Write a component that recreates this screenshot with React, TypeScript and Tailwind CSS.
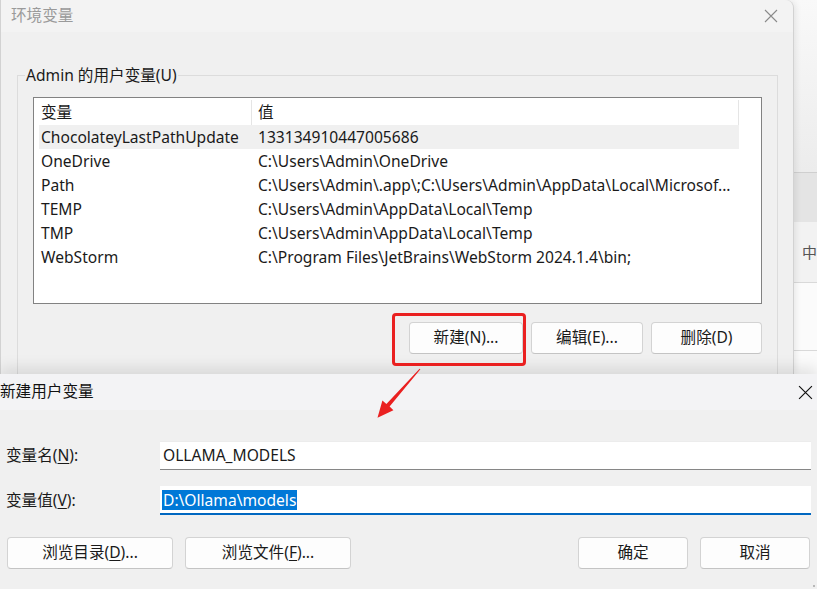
import React from "react";

const FONT = { fontFamily: '"Noto Sans", "Noto Sans CJK SC", sans-serif' };

function WinButton({ children, className = "" }: { children: React.ReactNode; className?: string }) {
  return (
    <div
      className={
        "flex items-center justify-center h-[32px] rounded-[4px] border border-[#d3d3d3] border-b-[#c4c4c4] bg-[#fdfdfd] text-[15.6px] text-[#1a1a1a] shrink-0 " +
        className
      }
    >
      {children}
    </div>
  );
}

function CloseX({ color, size = 14 }: { color: string; size?: number }) {
  return (
    <svg width={size} height={size} viewBox="0 0 14 14" fill="none">
      <path d="M1 1L13 13M13 1L1 13" stroke={color} strokeWidth="1.1" />
    </svg>
  );
}

export default function App() {
  const rows: [string, string][] = [
    ["ChocolateyLastPathUpdate", "133134910447005686"],
    ["OneDrive", "C:\\Users\\Admin\\OneDrive"],
    ["Path", "C:\\Users\\Admin\\.app\\;C:\\Users\\Admin\\AppData\\Local\\Microsof..."],
    ["TEMP", "C:\\Users\\Admin\\AppData\\Local\\Temp"],
    ["TMP", "C:\\Users\\Admin\\AppData\\Local\\Temp"],
    ["WebStorm", "C:\\Program Files\\JetBrains\\WebStorm 2024.1.4\\bin;"],
  ];

  return (
    <div className="relative w-[817px] h-[589px] overflow-hidden bg-[#f3f3f3] text-[#1a1a1a]" style={FONT}>
      {/* window in the far background (right edge) */}
      <div className="absolute left-[780px] top-0 w-[37px] h-[374px] flex flex-col bg-[#f7f7f7]">
        <div className="h-[172px] shrink-0 bg-gradient-to-b from-[#f9f9f9] to-[#ececec]" />
        <div className="h-[50px] shrink-0 border-t border-[#cfcfcf] bg-[#e4e4e4]" />
        <div className="h-[60px] shrink-0 bg-[#f2f2f2] flex items-center pl-[22px] text-[15px] text-[#555]">中</div>
        <div className="h-[68px] shrink-0 border-t border-[#d9d9d9] bg-[#fbfbfb]" />
        <div className="flex-1 border-t border-[#d9d9d9] bg-[#fbfbfb]" />
      </div>

      {/* back window: 环境变量 */}
      <div className="absolute left-0 top-0 w-[794px] h-[374px] overflow-hidden flex flex-col bg-[#f0f0f0] rounded-tr-[8px] border-l border-r border-[#d2d2d2] shadow-[2px_0_6px_rgba(0,0,0,0.08)]">
        <div className="h-[32px] shrink-0 flex items-center justify-between pl-[10px] pr-[15px] bg-[#f3f3f3] rounded-tr-[8px]">
          <span className="text-[15.6px] text-[#9a9a9a]">环境变量</span>
          <CloseX color="#8a8a8a" size={14} />
        </div>
        <fieldset className="shrink-0 mt-[32px] ml-[16px] mr-[15px] border border-[#dcdcdc] p-0 h-[330px] min-w-0">
          <legend className="ml-[7px] px-[1px] text-[15.6px] leading-[22px]">Admin 的用户变量(U)</legend>
          <div className="pl-[15px] pr-[15px]">
            <div className="mt-[11px] h-[207px] border border-[#828282] bg-white pl-[5px] pr-[22px] text-[15.6px]">
              <div className="flex h-[27px] items-center pt-[2px]">
                <div className="w-[213px] h-full flex items-center pl-[2px] border-r border-[#e5e5e5]">变量</div>
                <div className="flex-1 h-full flex items-center pl-[6px] border-r border-[#e5e5e5]">值</div>
              </div>
              {rows.map(([k, v], i) => (
                <div key={k} className={"flex h-[24px] items-center pt-[1px] " + (i === 0 ? "bg-[#f0f0f0]" : "")}>
                  <div className="w-[213px] pl-[2px] whitespace-nowrap">{k}</div>
                  <div className="flex-1 pl-[6px] whitespace-nowrap overflow-hidden">{v}</div>
                </div>
              ))}
            </div>
            <div className="mt-[18px] flex justify-end gap-[8px]">
              <WinButton className="w-[114px]">新建(N)...</WinButton>
              <WinButton className="w-[112px]">编辑(E)...</WinButton>
              <WinButton className="w-[111px]">删除(D)</WinButton>
            </div>
          </div>
        </fieldset>
      </div>

      {/* front dialog: 新建用户变量 */}
      <div className="absolute left-0 top-[374px] w-[817px] h-[215px] flex flex-col bg-[#f0f0f0] shadow-[0_-6px_14px_rgba(0,0,0,0.10)]">
        <div className="h-[36px] shrink-0 flex items-center justify-between bg-[#f3f3f5] pr-[4px]">
          <span className="text-[15.6px] text-[#111]">新建用户变量</span>
          <CloseX color="#111" size={15} />
        </div>
        <div className="flex flex-col pl-[6px] pr-[6px] text-[15.6px]">
          <div className="mt-[31px] flex items-center h-[29px]">
            <div className="w-[154px]">
              变量名(<span className="underline underline-offset-2">N</span>):
            </div>
            <div className="flex-1 h-full flex items-center bg-white border-b border-[#868686] border-t border-t-[#ececec] pl-[3px]">
              OLLAMA_MODELS
            </div>
          </div>
          <div className="mt-[16px] flex items-center h-[29px]">
            <div className="w-[154px]">
              变量值(<span className="underline underline-offset-2">V</span>):
            </div>
            <div className="flex-1 h-full flex items-center bg-white border-b-2 border-[#0067c0] pl-[2px]">
              <span className="bg-[#0078d7] text-white leading-[20px] px-[1px]">D:\Ollama\models</span>
            </div>
          </div>
          <div className="mt-[22px] flex items-center pl-[1px] pr-[1px]">
            <WinButton className="w-[166px]">
              浏览目录(<span className="underline underline-offset-2">D</span>)...
            </WinButton>
            <WinButton className="w-[166px] ml-[12px]">
              浏览文件(<span className="underline underline-offset-2">F</span>)...
            </WinButton>
            <div className="flex-1" />
            <WinButton className="w-[110px] border-[#0067c0] border-b-[#0067c0]">确定</WinButton>
            <WinButton className="w-[110px] ml-[12px]">取消</WinButton>
          </div>
        </div>
        <div className="absolute right-[2px] bottom-[2px] w-[2px] h-[2px] bg-[#b8b8b8]" />
      </div>

      {/* red annotation rectangle */}
      <div className="absolute left-[392px] top-[313px] w-[134px] h-[53px] border-[3px] border-[#ea2020] rounded-[4px]" />

      {/* red annotation arrow */}
      <svg className="absolute left-0 top-0 pointer-events-none" width="817" height="589">
        <polygon
          points="420.4,369.3 389.6,406.6 393.4,410.2 377.5,417.8 382.4,400.6 386.4,404 419.6,368.7"
          fill="#ea2020"
        />
      </svg>
    </div>
  );
}
